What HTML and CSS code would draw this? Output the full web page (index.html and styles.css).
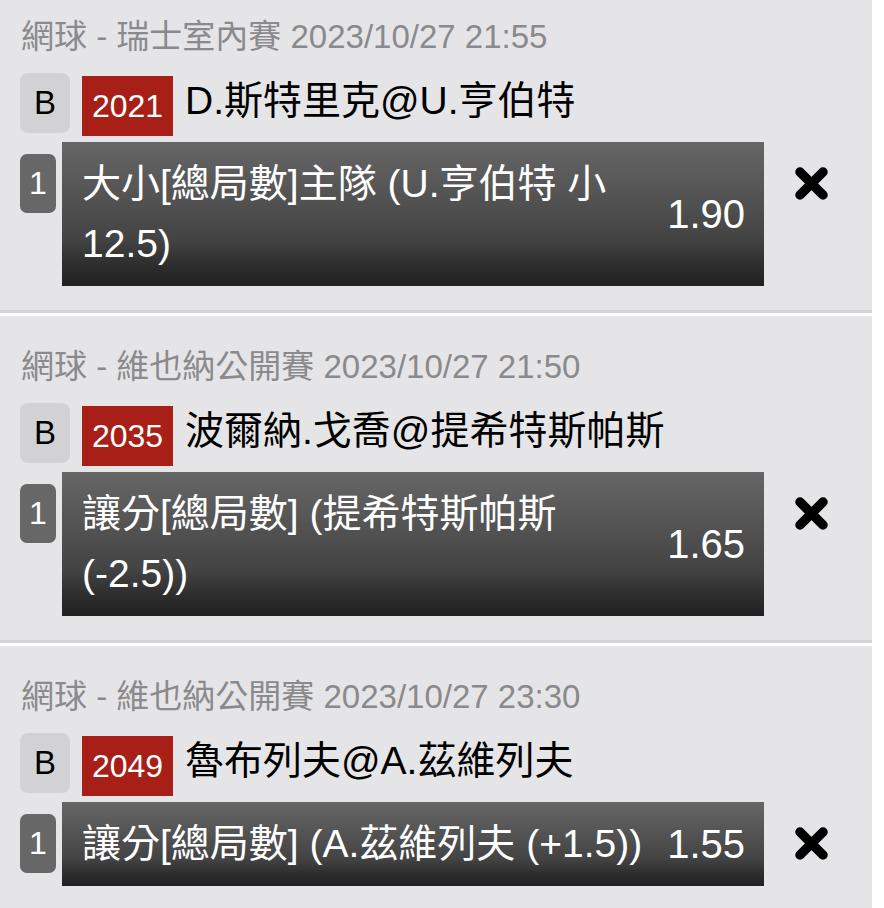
FILE: index.html
```html
<!DOCTYPE html>
<html lang="zh-Hant">
<head>
<meta charset="utf-8">
<title>投注單</title>
<link rel="stylesheet" href="styles.css">
</head>
<body>
<div class="list">
  <section class="bet">
    <div class="league">網球 - 瑞士室內賽 2023/10/27 21:55</div>
    <div class="match">
      <span class="tag-b">B</span>
      <span class="code">2021</span>
      <span class="teams">D.斯特里克@U.亨伯特</span>
    </div>
    <div class="sel">
      <span class="num">1</span>
      <div class="pick">
        <span class="label">大小[總局數]主隊 (U.亨伯特 小 12.5)</span>
        <span class="odds">1.90</span>
      </div>
      <span class="remove"><svg viewBox="0 0 37 37" width="37" height="37"><path d="M7 7 L30 30 M30 7 L7 30" stroke="#000" stroke-width="9.5" stroke-linecap="round" fill="none"/></svg></span>
    </div>
  </section>
  <section class="bet">
    <div class="league">網球 - 維也納公開賽 2023/10/27 21:50</div>
    <div class="match">
      <span class="tag-b">B</span>
      <span class="code">2035</span>
      <span class="teams">波爾納.戈喬@提希特斯帕斯</span>
    </div>
    <div class="sel">
      <span class="num">1</span>
      <div class="pick">
        <span class="label">讓分[總局數] (提希特斯帕斯 (-2.5))</span>
        <span class="odds">1.65</span>
      </div>
      <span class="remove"><svg viewBox="0 0 37 37" width="37" height="37"><path d="M7 7 L30 30 M30 7 L7 30" stroke="#000" stroke-width="9.5" stroke-linecap="round" fill="none"/></svg></span>
    </div>
  </section>
  <section class="bet">
    <div class="league">網球 - 維也納公開賽 2023/10/27 23:30</div>
    <div class="match">
      <span class="tag-b">B</span>
      <span class="code">2049</span>
      <span class="teams">魯布列夫@A.茲維列夫</span>
    </div>
    <div class="sel">
      <span class="num">1</span>
      <div class="pick">
        <span class="label">讓分[總局數] (A.茲維列夫 (+1.5))</span>
        <span class="odds">1.55</span>
      </div>
      <span class="remove"><svg viewBox="0 0 37 37" width="37" height="37"><path d="M7 7 L30 30 M30 7 L7 30" stroke="#000" stroke-width="9.5" stroke-linecap="round" fill="none"/></svg></span>
    </div>
  </section>
</div>
</body>
</html>
```
FILE: styles.css
```css
html, body {
  margin: 0;
  padding: 0;
  background: #ffffff;
}
body {
  font-family: "Liberation Sans", "Noto Sans CJK TC", sans-serif;
  overflow: hidden;
}
.list {
  width: 872px;
}
.bet {
  background: #e5e5e7;
  padding: 31px 0 24px 20px;
  border-bottom: 3px solid #d4d4d6;
  margin-bottom: 3px;
}
.bet:first-child {
  padding-top: 17px;
}
.league {
  font-size: 33px;
  line-height: 40px;
  color: #8a8a8c;
  padding-left: 1px;
  white-space: nowrap;
}
.match {
  display: flex;
  align-items: flex-start;
  margin-top: 16px;
}
.tag-b {
  width: 50px;
  height: 60px;
  border-radius: 8px;
  background: #d2d2d4;
  color: #000;
  font-size: 33px;
  display: flex;
  align-items: center;
  justify-content: center;
}
.code {
  margin-left: 12px;
  margin-top: 3px;
  width: 91px;
  height: 60px;
  background: #a81f17;
  color: #fff;
  font-size: 32px;
  display: flex;
  align-items: center;
  justify-content: center;
}
.teams {
  margin-left: 12px;
  font-size: 39px;
  line-height: 56px;
  color: #000;
  white-space: nowrap;
}
.sel {
  display: flex;
  align-items: flex-start;
  margin-top: 6px;
}
.num {
  margin-top: 12px;
  width: 36px;
  height: 59px;
  border-radius: 7px;
  background: #676767;
  color: #fff;
  font-size: 32px;
  display: flex;
  align-items: center;
  justify-content: center;
}
.pick {
  margin-left: 6px;
  width: 702px;
  box-sizing: border-box;
  padding: 12px 19px 12px 20px;
  display: flex;
  align-items: center;
  justify-content: space-between;
  background: linear-gradient(to bottom, #666666 0%, #525252 40%, #434343 68%, #2e2e2e 85%, #212121 100%);
  color: #fff;
}
.label {
  width: 570px;
  font-size: 39px;
  line-height: 60px;
}
.odds {
  flex: none;
  font-size: 40px;
  line-height: 60px;
}
.remove {
  margin-left: 29px;
  margin-top: 23px;
  width: 37px;
  height: 37px;
  display: block;
}
.remove svg {
  display: block;
}
```
